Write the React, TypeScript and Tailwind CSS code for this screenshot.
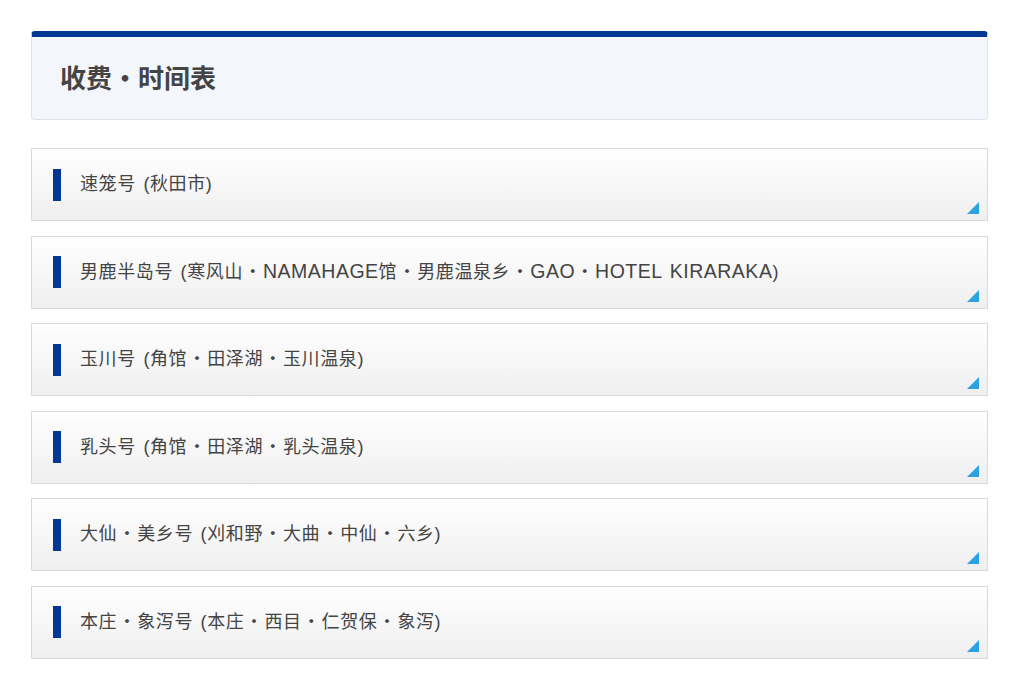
import React from "react";

const routes = [
  "速笼号 (秋田市)",
  "男鹿半岛号 (寒风山・NAMAHAGE馆・男鹿温泉乡・GAO・HOTEL KIRARAKA)",
  "玉川号 (角馆・田泽湖・玉川温泉)",
  "乳头号 (角馆・田泽湖・乳头温泉)",
  "大仙・美乡号 (刈和野・大曲・中仙・六乡)",
  "本庄・象泻号 (本庄・西目・仁贺保・象泻)",
];

// the reference font has a full-width middle dot and wider latin letters
function Label({ text, dot }: { text: string; dot: string }) {
  const parts = text.split(/(・|[A-Za-z]+(?: [A-Za-z]+)*)/).filter(Boolean);
  return (
    <>
      {parts.map((p, i) =>
        p === "・" ? (
          <span key={i} className={`inline-block text-center ${dot}`}>
            ・
          </span>
        ) : /[A-Za-z]/.test(p) ? (
          <span key={i} className="text-[19.5px] tracking-[0.5px]">
            {p}
          </span>
        ) : (
          <React.Fragment key={i}>{p}</React.Fragment>
        )
      )}
    </>
  );
}

function RouteRow({ label }: { label: string }) {
  return (
    <div className="relative h-[73px] border border-[#d9d9d9] bg-gradient-to-b from-white to-[#efefef] flex items-center pl-[21px]">
      <span className="w-2 h-8 bg-[#003893] mr-[19px]" />
      <span className="text-[18px] text-[#444] tracking-[0.6px] [word-spacing:2px]">
        <Label text={label} dot="w-[20px]" />
      </span>
      <svg className="absolute right-[8px] bottom-[6px]" width="12" height="12" viewBox="0 0 12 12">
        <polygon points="12,0 12,12 0,12" fill="#2ba3e3" />
      </svg>
    </div>
  );
}

export default function App() {
  return (
    <div
      className="min-h-screen bg-white px-[31px] pt-[31px] pb-4"
      style={{ fontFamily: '"Liberation Sans", "Noto Sans CJK SC", sans-serif' }}
    >
      <div className="w-[957px]">
        <div className="h-[89px] rounded-[4px] border border-[#dde3ee] border-t-[6px] border-t-[#003893] bg-[#f3f6fb] flex items-center pl-[28px]">
          <h1 className="text-[26px] font-bold text-[#444] translate-y-[1px]">
            <Label text="收费・时间表" dot="w-[26px]" />
          </h1>
        </div>
        <div className="mt-[28px] flex flex-col gap-[14.5px]">
          {routes.map((r) => (
            <RouteRow key={r} label={r} />
          ))}
        </div>
      </div>
    </div>
  );
}
